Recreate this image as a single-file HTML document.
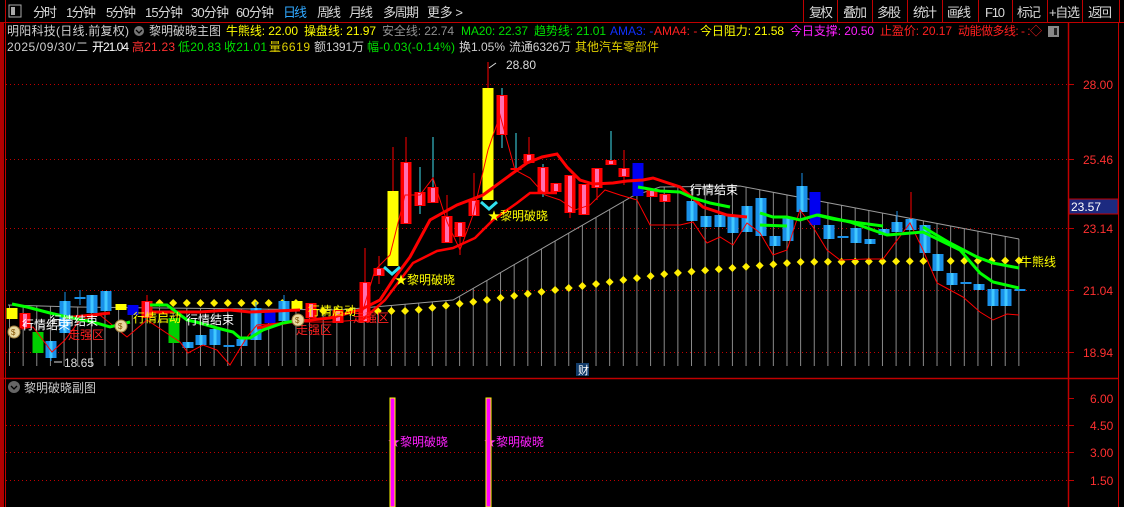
<!DOCTYPE html>
<html><head><meta charset="utf-8">
<style>
html,body{margin:0;padding:0;background:#000;width:1124px;height:507px;overflow:hidden;font-family:"Liberation Sans","Noto Sans CJK SC",sans-serif;}
svg{display:block}
text{font-family:"Liberation Sans","Noto Sans CJK SC",sans-serif;}
</style></head><body>
<svg id="s" width="1124" height="507" viewBox="0 0 1124 507" xmlns="http://www.w3.org/2000/svg">
<rect width="1124" height="507" fill="#000"/>
<rect x="0" y="22" width="4" height="485" fill="#b00000"/>
<line x1="5.5" y1="0" x2="5.5" y2="507" stroke="#c00000"/>
<line x1="0" y1="22.5" x2="1124" y2="22.5" stroke="#c00000"/>
<rect x="9" y="5" width="12" height="12" fill="none" stroke="#aaa"/>
<rect x="11" y="7" width="4" height="8" fill="#aaa"/>
<g font-size="13" fill="#d8d8d8">
<text x="33" y="17" textLength="24">分时</text><text x="66" y="17" textLength="30">1分钟</text><text x="106" y="17" textLength="30">5分钟</text><text x="145" y="17" textLength="38">15分钟</text><text x="191" y="17" textLength="38">30分钟</text><text x="236" y="17" textLength="38">60分钟</text><text x="283" y="17" fill="#30a8ff" textLength="24">日线</text><text x="317" y="17" textLength="24">周线</text><text x="349" y="17" textLength="24">月线</text><text x="383" y="17" textLength="36">多周期</text><text x="427" y="17" textLength="36">更多 &gt;</text>
<text x="809" y="17" textLength="24">复权</text><text x="843" y="17" textLength="24">叠加</text><text x="877" y="17" textLength="24">多股</text><text x="913" y="17" textLength="24">统计</text><text x="947" y="17" textLength="24">画线</text><text x="985" y="17" textLength="20">F10</text><text x="1017" y="17" textLength="24">标记</text><text x="1049" y="17" textLength="31">+自选</text><text x="1088" y="17" textLength="24">返回</text>
</g>
<g stroke="#c00000">
<line x1="803.5" y1="0" x2="803.5" y2="22"/><line x1="837.5" y1="0" x2="837.5" y2="22"/><line x1="872.5" y1="0" x2="872.5" y2="22"/><line x1="907.5" y1="0" x2="907.5" y2="22"/><line x1="942.5" y1="0" x2="942.5" y2="22"/><line x1="978.5" y1="0" x2="978.5" y2="22"/><line x1="1012.5" y1="0" x2="1012.5" y2="22"/><line x1="1047.5" y1="0" x2="1047.5" y2="22"/><line x1="1082.5" y1="0" x2="1082.5" y2="22"/><line x1="1119.5" y1="0" x2="1119.5" y2="22"/>
</g>
<line x1="1068.5" y1="22" x2="1068.5" y2="507" stroke="#c00000" stroke-width="1.5"/>
<line x1="1118.5" y1="22" x2="1118.5" y2="507" stroke="#c00000"/>
<line x1="0" y1="378.5" x2="1118" y2="378.5" stroke="#c00000" stroke-width="1.5"/>
<g font-size="12">
<text x="7" y="35" fill="#d0d0d0" textLength="122">明阳科技(日线.前复权)</text>
<circle cx="139" cy="31" r="5" fill="#777"/><path d="M136 30 L139 33 L142 30" stroke="#000" fill="none" stroke-width="1.3"/>
<text x="149" y="35" fill="#d0d0d0">黎明破晓主图</text>
<text x="226" y="35" fill="#ffff00" textLength="72">牛熊线: 22.00</text>
<text x="304" y="35" fill="#ffff00" textLength="72">操盘线: 21.97</text>
<text x="382" y="35" fill="#909090" textLength="72">安全线: 22.74</text>
<text x="461" y="35" fill="#00e000" textLength="67">MA20: 22.37</text>
<text x="534" y="35" fill="#00e000" textLength="72">趋势线: 21.01</text>
<text x="610" y="35" fill="#1030ff">AMA3: -</text>
<text x="654" y="35" fill="#ff2020">AMA4: -</text>
<text x="700" y="35" fill="#ffff00" textLength="84">今日阻力: 21.58</text>
<text x="790" y="35" fill="#ff20ff" textLength="84">今日支撑: 20.50</text>
<text x="880" y="35" fill="#ff2020" textLength="72">止盈价: 20.17</text>
<text x="958" y="35" fill="#ff2020" textLength="84">动能做多线: - :◇</text>
<rect x="1048" y="26" width="11" height="11" fill="#888"/><rect x="1054" y="28" width="3" height="7" fill="#222"/>
<text x="7" y="51" fill="#d0d0d0" textLength="81">2025/09/30/二</text>
<text x="92" y="51" fill="#fff" textLength="37">开21.04</text>
<text x="132" y="51" fill="#ff3030" textLength="43">高21.23</text>
<text x="178" y="51" fill="#00e000" textLength="43">低20.83</text>
<text x="224" y="51" fill="#00e000" textLength="43">收21.01</text>
<text x="251" y="51" fill="#e0d000" textLength="0"></text>
<text x="269" y="51" fill="#e0d000" textLength="41">量6619</text>
<text x="314" y="51" fill="#d0d0d0" textLength="50">额1391万</text>
<text x="367" y="51" fill="#00e000" textLength="88">幅-0.03(-0.14%)</text>
<text x="459" y="51" fill="#d0d0d0" textLength="46">换1.05%</text>
<text x="509" y="51" fill="#d0d0d0" textLength="62">流通6326万</text>
<text x="575" y="51" fill="#e0d000" textLength="84">其他汽车零部件</text>
</g>
<g stroke="#c00000" stroke-dasharray="1,3">
<line x1="6" y1="84.5" x2="1068" y2="84.5"/><line x1="6" y1="159.5" x2="1068" y2="159.5"/><line x1="6" y1="228.5" x2="1068" y2="228.5"/><line x1="6" y1="290.5" x2="1068" y2="290.5"/><line x1="6" y1="352.5" x2="1068" y2="352.5"/>
<line x1="6" y1="425.5" x2="1068" y2="425.5"/><line x1="6" y1="452.5" x2="1068" y2="452.5"/><line x1="6" y1="480.5" x2="1068" y2="480.5"/>
</g>
<g font-size="12" fill="#ff3030">
<text x="1083" y="89">28.00</text><text x="1083" y="164">25.46</text><text x="1083" y="233">23.14</text><text x="1083" y="295">21.04</text><text x="1083" y="357">18.94</text>
<text x="1090" y="403">6.00</text><text x="1090" y="430">4.50</text><text x="1090" y="457">3.00</text><text x="1090" y="485">1.50</text>
</g>
<g stroke="#c00000"><line x1="1069" y1="84.5" x2="1074" y2="84.5"/><line x1="1069" y1="159.5" x2="1074" y2="159.5"/><line x1="1069" y1="228.5" x2="1074" y2="228.5"/><line x1="1069" y1="290.5" x2="1074" y2="290.5"/><line x1="1069" y1="352.5" x2="1074" y2="352.5"/><line x1="1069" y1="398.5" x2="1074" y2="398.5"/><line x1="1069" y1="425.5" x2="1074" y2="425.5"/><line x1="1069" y1="452.5" x2="1074" y2="452.5"/><line x1="1069" y1="480.5" x2="1074" y2="480.5"/></g>
<rect x="1069" y="199" width="49" height="15" fill="#1c2a80" stroke="#c00000"/>
<text x="1071" y="211" font-size="12" fill="#fff">23.57</text>
<g id="g"></g>
<g font-size="12">
<text x="22" y="329" fill="#fff">行情结束</text><text x="50" y="325" fill="#fff">行情结束</text>
<text x="68" y="339" fill="#ff2020">走强区</text>
<text x="133" y="322" fill="#ffff00">行情启动</text><text x="186" y="324" fill="#fff">行情结束</text>
<text x="296" y="334" fill="#ff2020">走强区</text><text x="308" y="315" fill="#ffff00">行情启动</text>
<text x="353" y="322" fill="#ff2020">走强区</text>
<text x="690" y="194" fill="#fff">行情结束</text>
<text x="1020" y="266" fill="#ffff00">牛熊线</text>
<text x="395" y="284" fill="#ffff00">★黎明破晓</text><text x="488" y="220" fill="#ffff00">★黎明破晓</text>
<text x="506" y="69" fill="#ddd">28.80</text><text x="64" y="367" fill="#ddd">18.65</text>
<text x="24" y="392" fill="#ccc">黎明破晓副图</text>
<text x="388" y="446" fill="#ff20ff">★黎明破晓</text><text x="484" y="446" fill="#ff20ff">★黎明破晓</text>
</g>
<circle cx="14" cy="387" r="6" fill="#666"/><path d="M11 386 L14 389 L17 386" stroke="#000" fill="none" stroke-width="1.3"/>
<path d="M489 68 L496 63" stroke="#ddd"/><path d="M54 362 L62 362" stroke="#ddd"/>
<path d="M384 267 L392 274 L400 267" stroke="#30e0f0" stroke-width="3" fill="none"/>
<path d="M481 202 L489 209 L497 202" stroke="#30e0f0" stroke-width="3" fill="none"/>
<rect x="576" y="363" width="13" height="13" fill="#123c6a"/><text x="578" y="374" font-size="11" fill="#fff">财</text>
<g fill="#e8d8a0" stroke="#a08040">
<circle cx="14" cy="332" r="6"/><circle cx="121" cy="326" r="6"/><circle cx="298" cy="320" r="6"/>
</g>
<g font-size="8" fill="#805000"><text x="11" y="335">$</text><text x="118" y="329">$</text><text x="295" y="323">$</text></g>
<rect x="390" y="398" width="5" height="109" fill="#ff00ff" stroke="#ffff00"/>
<rect x="486" y="398" width="5" height="109" fill="#ff00ff" stroke="#ffff00"/>
</svg>
<script>
var g=document.getElementById('g'),h='';
function L(pts,c,w){h+='<polyline points="'+pts+'" fill="none" stroke="'+c+'" stroke-width="'+w+'"/>';}
var gl=[[8,305],[75,307],[340,310],[453,300],[633,196],[660,187],[740,186],[1019,239]];
function gy(x){for(var i=0;i<gl.length-1;i++){if(x>=gl[i][0]&&x<=gl[i+1][0]){var t=(x-gl[i][0])/(gl[i+1][0]-gl[i][0]);return gl[i][1]+t*(gl[i+1][1]-gl[i][1]);}}return 305;}
for(var i=0;i<=74;i++){var x=9.5+13.64*i;var yy=gy(x);h+='<line x1="'+x+'" y1="'+yy+'" x2="'+x+'" y2="366" stroke="#8a8a8a"/>';}
L(gl.map(function(p){return p.join(',')}).join(' '),'#9a9a9a',1);
for(var i=11;i<=74;i++){var x=9.5+13.64*i,y;if(x<300)y=303;else if(x<410)y=311;else if(x<665)y=311-(x-410)*37/255;else if(x<800)y=274-(x-665)*12/135;else y=262-(x-800)*1.5/219;h+='<path d="M'+x+' '+(y-4)+' L'+(x+4)+' '+y+' L'+x+' '+(y+4)+' L'+(x-4)+' '+y+'Z" fill="#ffee00"/>';}
var C=[[12,308,319,'Y'],[25,313,328,'R'],[38,332,353,'G'],[51,341,358,'B',341,361],[65,301,333,'B',292,333],[80,297,299,'B',290,305],[92,295,313,'B'],[106,291,311,'B'],[121,304,310,'Y'],[133,305,315,'D'],[147,301,318,'R',295,318],[174,318,343,'G'],[188,342,348,'B'],[201,335,345,'B'],[215,329,345,'B'],[229,345,347,'B'],[242,339,346,'B'],[256,308,340,'B',302,340],[270,310,323,'D'],[284,301,321,'B',295,321],[297,301,309,'Y'],[311,303,318,'R'],[338,310,323,'R'],[365,282,322,'R',248,322],[379,268,276,'R',256,284],[393,191,266,'Y',147,266],[406,162,224,'R',137,224],[420,192,206,'R',167,214,'c'],[433,187,203,'R',137,203,'c'],[447,216,243,'R',195,243],[460,222,237,'R',222,255],[474,200,216,'R',173,216],[488,88,200,'Y',62,200],[502,95,135,'R',88,148,'c'],[516,168,170,'R',133,170,'c'],[529,154,163,'R',137,163],[543,167,193,'R',164,197,'c'],[556,183,192,'R'],[570,175,213,'R',175,218],[584,184,215,'R'],[597,168,188,'R',168,200],[611,160,165,'R',131,165,'c'],[624,168,177,'R',150,185],[638,163,196,'D'],[652,190,197,'R'],[665,194,202,'R'],[692,201,221,'B'],[706,216,227,'B'],[720,215,227,'B'],[733,215,233,'B'],[747,206,232,'B'],[761,198,236,'B'],[775,236,246,'B'],[788,217,241,'B'],[802,186,212,'B',173,212],[815,192,225,'D'],[829,225,239,'B'],[843,236,238,'B'],[856,228,243,'B'],[870,239,244,'B'],[884,229,235,'B'],[897,222,232,'B',211,232],[911,219,230,'B',192,230,'r'],[925,225,253,'B'],[938,254,271,'B'],[952,273,285,'B'],[966,282,284,'B'],[979,284,290,'B'],[993,289,306,'B'],[1006,289,306,'B'],[1020,289,291,'B']];
var col={R:'#ff0000',B:'#1a90e8',D:'#0000f0',G:'#00d000',Y:'#ffff00'};
C.forEach(function(c){var x=c[0],t=c[1],b=c[2],k=c[3];var wc=c[6]=='c'?'#40e0f0':(c[6]=='r'?'#ff0000':col[k]);if(k=='Y')wc='#ff0000';
if(c[4]!==undefined)h+='<line x1="'+x+'" y1="'+c[4]+'" x2="'+x+'" y2="'+c[5]+'" stroke="'+wc+'"/>';
h+='<rect x="'+(x-5.5)+'" y="'+t+'" width="11" height="'+Math.max(2,b-t)+'" fill="'+col[k]+'"/>';
if(k=='R'&&b-t>4)h+='<rect x="'+(x-2)+'" y="'+(t+1)+'" width="4" height="'+(b-t-2)+'" fill="#ff70b0"/>';
if(k=='B'&&b-t>4)h+='<rect x="'+(x-1.5)+'" y="'+t+'" width="3" height="'+(b-t)+'" fill="#40c8ff"/>';});
L('8,331 33,327 52,352 65,340 80,320 100,315 127,337 147,320 180,342 188,353 203,345 217,350 230,365 247,337 257,325 290,322 330,322 360,320 375,270 390,255 405,195 420,195 433,178 447,222 460,250 473,215 488,150 500,115 515,170 530,178 545,195 560,200 575,210 590,205 605,190 620,195 637,200 650,225 680,225 693,222 707,243 720,237 733,245 747,223 760,233 773,255 787,250 800,210 813,227 827,250 840,260 867,259 883,259 910,223 923,250 937,283 950,290 963,297 980,312 993,320 1007,314 1019,315','#ff0000',1);
L('65,318 110,313','#ff0000',3);
L('150,312 200,312 230,310 250,312 300,310','#ff0000',3);
L('257,328 290,322 330,318 360,310 380,300 393,280 410,257 430,220 457,205 483,195 513,173 527,163 542,157 557,154 567,167 580,180 593,184 613,183 627,181 643,180 653,178 680,187 703,207 727,215 747,217','#ff0000',3);
L('360,322 385,300 413,263 437,251 453,248 475,238 493,220 517,203 530,193 557,193','#ff0000',2.5);
L('12,304 27,307 50,313 67,317 93,322 110,327 130,322','#00ff00',3);
L('150,305 167,305 187,320 200,323 217,328 233,332 240,338 250,338 263,330 283,323 300,320','#00ff00',3);
L('638,187 660,191 680,192 693,198 710,203 730,207','#00ff00',3);
L('760,213 773,217 787,217 800,220 817,215 833,219 860,223 883,226','#00ff00',3);
L('923,227 950,243 977,257 993,263 1019,268','#00ff00',3);
L('818,215 850,222 887,235 923,232 960,250 980,273 993,282 1019,288','#00ff00',3);
L('760,225 787,226','#00ff00',3);
g.innerHTML=h;
</script>
</body></html>
